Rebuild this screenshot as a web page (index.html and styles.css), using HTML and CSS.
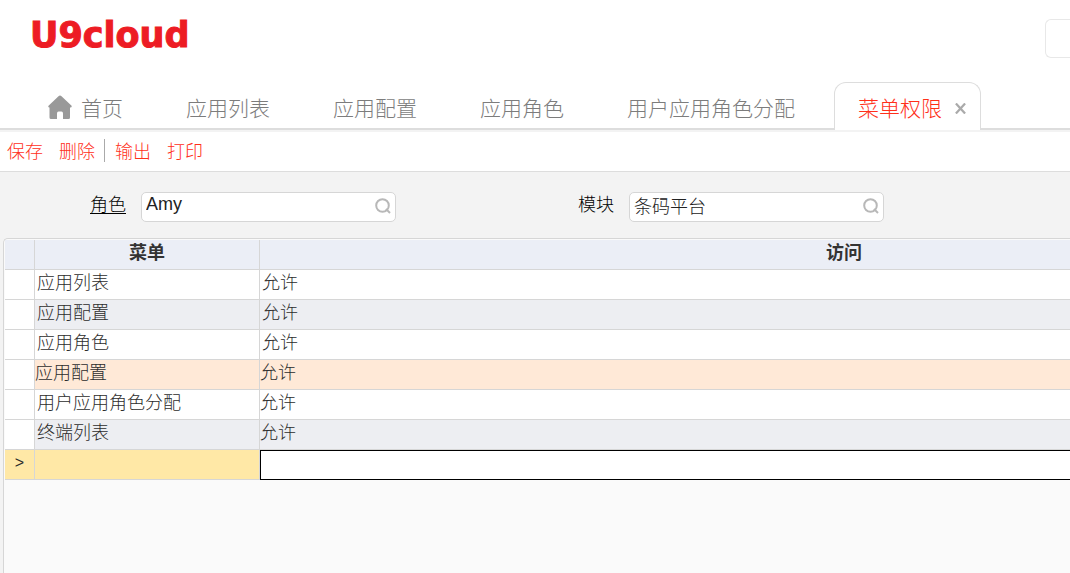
FILE: index.html
```
<!DOCTYPE html>
<html lang="zh-CN">
<head>
<meta charset="utf-8">
<meta name="viewport" content="width=device-width, initial-scale=1">
<title>U9cloud</title>
<link rel="stylesheet" href="styles.css">
</head>
<body>
<header class="header">
  <div class="brand">U9cloud</div>
  <div class="header-box"></div>
</header>
<nav class="tabs">
  <a class="tab" href="#"><svg class="home" viewBox="0 0 24 24" aria-hidden="true"><path d="M12 0.5Q12.8 0.5 13.5 1.2L23.6 10.8Q24 12.5 22.5 12.5H22V22.5Q22 24 20.500 24H15V18.500Q15 16.500 13.500 16.500H10.500Q9 16.500 9 18.500V24H3Q1.500 24 1.500 22.500V12.500H1Q-0.200 12 .5 10.800L10.500 1.200Q11.200 .5 12 .5Z" fill="#999"/></svg>首页</a>
  <a class="tab" href="#">应用列表</a>
  <a class="tab" href="#">应用配置</a>
  <a class="tab" href="#">应用角色</a>
  <a class="tab" href="#">用户应用角色分配</a>
  <div class="tab tab-active"><a class="tab-link" href="#">菜单权限</a><button class="close" type="button" aria-label="关闭"><svg viewBox="0 0 12 12"><path d="M1 0.500L11 11.500M11 .5L1 11.500" stroke="#aaa" stroke-width="2.400"/></svg></button></div>
</nav>
<div class="toolbar">
  <button class="action" type="button">保存</button>
  <button class="action" type="button">删除</button>
  <span class="divider"></span>
  <button class="action" type="button">输出</button>
  <button class="action" type="button">打印</button>
</div>
<main class="content">
  <form class="filters">
    <div class="field">
      <label class="label label-linked" for="role">角色</label>
      <div class="lookup"><input class="lookup-input" id="role" type="text" value="Amy"><button class="search" type="button" aria-label="查找角色"><svg viewBox="0 0 16 16"><circle cx="7.500" cy="7.500" r="6.300" fill="none" stroke="#b8b8b8" stroke-width="2"/><path d="M11 11L15 15" stroke="#b8b8b8" stroke-width="2"/></svg></button></div>
    </div>
    <div class="field">
      <label class="label" for="module">模块</label>
      <div class="lookup"><input class="lookup-input" id="module" type="text" value="条码平台"><button class="search" type="button" aria-label="查找模块"><svg viewBox="0 0 16 16"><circle cx="7.500" cy="7.500" r="6.300" fill="none" stroke="#b8b8b8" stroke-width="2"/><path d="M11 11L15 15" stroke="#b8b8b8" stroke-width="2"/></svg></button></div>
    </div>
  </form>
  <section class="panel">
    <table class="grid">
      <colgroup><col class="col-mark"><col class="col-menu"><col class="col-access"></colgroup>
      <thead><tr><th></th><th>菜单</th><th>访问</th></tr></thead>
      <tbody>
        <tr><td></td><td>应用列表</td><td>允许</td></tr>
        <tr class="alt"><td></td><td>应用配置</td><td>允许</td></tr>
        <tr><td></td><td>应用角色</td><td>允许</td></tr>
        <tr class="edited"><td></td><td class="flush">应用配置</td><td class="flush">允许</td></tr>
        <tr><td></td><td>用户应用角色分配</td><td class="flush">允许</td></tr>
        <tr class="alt"><td></td><td>终端列表</td><td class="flush">允许</td></tr>
        <tr class="current"><td class="mark">&gt;</td><td></td><td class="editing"><input class="cell-input" type="text" aria-label="访问"></td></tr>
      </tbody>
    </table>
  </section>
</main>
</body>
</html>
```
FILE: styles.css
```
* {
  box-sizing: border-box;
}

body {
  margin: 0;
  min-height: 100vh;
  display: flex;
  flex-direction: column;
  overflow: hidden;
  background: #fff;
  color: #2c2c2c;
  font-family: "Liberation Sans", "Noto Sans CJK SC", sans-serif;
  font-size: 18px;
  font-weight: 300;
}

button,
input {
  font: inherit;
  color: inherit;
  border: 0;
  padding: 0;
  background: none;
}

button {
  cursor: pointer;
}

svg {
  display: block;
}

.header {
  display: flex;
  justify-content: space-between;
  align-items: flex-start;
  height: 82px;
  padding: 16px 0 0 30px;
}

.brand {
  color: #ed1c24;
  font-family: "DejaVu Sans", sans-serif;
  font-size: 35px;
  font-weight: 700;
  line-height: 38px;
  -webkit-text-stroke: 1px #ed1c24;
}

.header-box {
  width: 25px;
  height: 39px;
  margin-top: 3px;
  border: 1px solid #e8e8e8;
  border-right: 0;
  border-radius: 6px 0 0 6px;
}

.tabs {
  display: flex;
  gap: 15px;
  height: 48px;
  padding-left: 24px;
  white-space: nowrap;
  box-shadow: inset 0 -2px #ddd;
}

.tab {
  display: flex;
  align-items: center;
  padding: 2px 24px 0;
  color: #7c7c7c;
  font-size: 21px;
  text-decoration: none;
}

.home {
  width: 24px;
  height: 24px;
  margin-right: 9px;
}

.tab-active {
  gap: 13px;
  padding: 1px 14px 0 23px;
  border: 1px solid #ddd;
  border-bottom: 0;
  border-radius: 12px 12px 0 0;
  background: #fff;
}

.tab-link {
  color: #ff301a;
  text-decoration: none;
}

.close {
  width: 11px;
  height: 12px;
  margin-top: 3px;
}

.toolbar {
  display: flex;
  align-items: center;
  height: 42px;
  padding: 0 0 4px 7px;
  border-top: 2px solid #f3f3f3;
  border-bottom: 1px solid #ddd;
}

.action {
  margin-right: 16px;
  color: #ff301a;
}

.divider {
  width: 1px;
  height: 23px;
  margin: 2px 10px 0 -7px;
  background: #aaa;
}

.content {
  flex: 1;
  display: flex;
  flex-direction: column;
  background: #f3f3f3;
}

.filters {
  display: flex;
  gap: 182px;
  padding: 20px 0 16px 90px;
}

.field {
  display: flex;
  gap: 15px;
}

.label {
  color: #000;
  line-height: 26px;
}

.label-linked {
  text-decoration: underline;
  text-decoration-thickness: 1px;
  text-underline-offset: 2px;
}

.lookup {
  display: flex;
  width: 255px;
  height: 30px;
  border: 1px solid #d6d6d6;
  border-radius: 5px;
  background: #fff;
}

.lookup-input {
  flex: 1;
  min-width: 0;
  height: 24px;
  padding: 0 0 1px 4px;
  color: #222;
  line-height: 22px;
  outline: 0;
}

.search {
  width: 16px;
  height: 16px;
  margin: 5px 4px 0 0;
}

.panel {
  flex: 1;
  margin-left: 3px;
  padding: 1px 0 0 1px;
  overflow: hidden;
  border: 1px solid #d6d6d6;
  border-width: 1px 0 0 1px;
  border-radius: 5px 0 0 0;
  background: #fafafa;
}

.grid {
  width: 1424px;
  table-layout: fixed;
  border-collapse: separate;
  border-spacing: 0;
}

.col-mark {
  width: 30px;
}

.col-menu {
  width: 225px;
}

th,
td {
  height: 30px;
  padding: 0 2px 3px;
  border: 1px solid #d6d6d6;
  border-width: 0 1px 1px 0;
  background: #fff;
  line-height: 26px;
  text-align: left;
}

th {
  background: #ebeef6;
  color: #333;
  font-weight: 700;
  text-align: center;
}

.alt td:not(:first-child) {
  background: #edeef2;
}

.edited td:not(:first-child) {
  background: #ffe9d7;
}

.current td {
  background: #ffe8a6;
}

td.flush {
  padding-left: 0;
}

td.mark {
  font-size: 16px;
  text-align: center;
}

td.editing {
  padding: 0;
  border: 0;
}

.cell-input {
  display: block;
  width: 100%;
  height: 30px;
  border: 1px solid #000;
  background: #fff;
  outline: 0;
}
```
